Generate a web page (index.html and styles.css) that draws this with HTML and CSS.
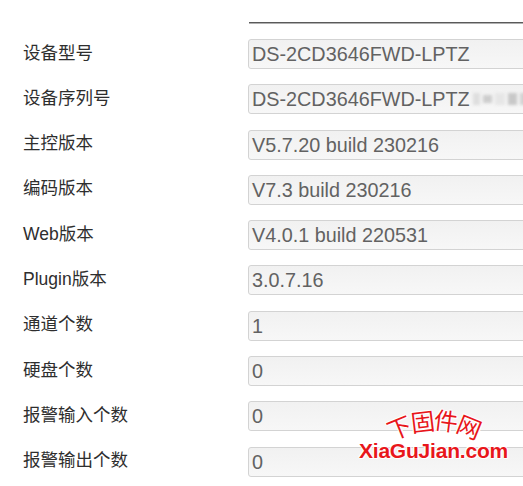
FILE: index.html
```html
<!DOCTYPE html>
<html lang="zh-CN">
<head>
<meta charset="utf-8">
<title>设备信息</title>
<link rel="stylesheet" href="styles.css">
</head>
<body>
<div class="page">
  <div class="topline"></div>
  <div class="form">
    <div class="label">设备型号</div>
    <div class="field">DS-2CD3646FWD-LPTZ</div>
    <div class="label">设备序列号</div>
    <div class="field">DS-2CD3646FWD-LPTZ<span class="mosaic"><i class="m1"></i><i class="m2"></i><i class="m3"></i><i class="m4"></i><i class="m5"></i></span></div>
    <div class="label">主控版本</div>
    <div class="field">V5.7.20 build 230216</div>
    <div class="label">编码版本</div>
    <div class="field">V7.3 build 230216</div>
    <div class="label">Web版本</div>
    <div class="field">V4.0.1 build 220531</div>
    <div class="label">Plugin版本</div>
    <div class="field">3.0.7.16</div>
    <div class="label">通道个数</div>
    <div class="field">1</div>
    <div class="label">硬盘个数</div>
    <div class="field">0</div>
    <div class="label">报警输入个数</div>
    <div class="field">0</div>
    <div class="label">报警输出个数</div>
    <div class="field">0</div>
  </div>
  <div class="watermark">
    <div class="wm-cn"><span class="c1">下</span><span class="c2">固</span><span class="c3">件</span><span class="c4">网</span></div>
    <div class="wm-en">XiaGuJian.com</div>
  </div>
</div>
</body>
</html>
```

FILE: styles.css
```css
html, body {
  margin: 0;
  padding: 0;
  background: #ffffff;
  overflow: hidden;
  width: 523px;
  height: 486px;
}
.page {
  position: relative;
  padding-top: 22px;
  width: 523px;
  height: 486px;
  box-sizing: border-box;
}
.topline {
  margin-left: 249px;
  height: 1px;
  background: #5a5a5a;
  border-bottom: 1px solid #b0b0b0;
}
.form {
  margin-top: 15px;
  display: grid;
  grid-template-columns: 248px 290px;
  grid-auto-rows: 30px;
  row-gap: 15.3px;
  align-items: center;
}
.label {
  padding-left: 23px;
  font-family: "Liberation Sans", "Noto Sans CJK SC", sans-serif;
  font-size: 17.5px;
  line-height: 24px;
  margin-top: -3px;
  color: #2e2e2e;
  white-space: nowrap;
}
.field {
  box-sizing: border-box;
  height: 30px;
  border: 1px solid #d3d3d3;
  border-radius: 3px;
  background: linear-gradient(#f1f1f1, #f7f7f7);
  padding-left: 3px;
  font-family: "Liberation Sans", sans-serif;
  font-size: 19.8px;
  line-height: 28px;
  color: #626262;
  white-space: nowrap;
  overflow: hidden;
  display: flex;
  align-items: center;
}
.mosaic {
  display: inline-flex;
  align-items: center;
  gap: 3px;
  margin-left: 3px;
  height: 20px;
  filter: blur(1.4px);
}
.mosaic i {
  display: block;
  width: 9px;
  height: 12px;
  background: #d6d6d6;
}
.mosaic .m1 { background: #dedede; width: 7px; }
.mosaic .m2 { background: #cdcdcd; height: 8px; }
.mosaic .m3 { background: #e6e6e6; width: 10px; }
.mosaic .m4 { background: #c8c8c8; }
.mosaic .m5 { background: #d2d2d2; width: 12px; }
.watermark {
  position: absolute;
  left: 356px;
  top: 409px;
  width: 155px;
  text-align: center;
  color: #e8161b;
  font-family: "Liberation Sans", "Noto Sans CJK SC", sans-serif;
  text-shadow: 1px 0 0 #fff, -1px 0 0 #fff, 0 1px 0 #fff, 0 -1px 0 #fff, 1px 1px 0 #fff, -1px -1px 0 #fff;
}
.wm-cn {
  font-size: 24px;
  line-height: 28px;
  height: 30px;
  letter-spacing: -1px;
}
.wm-cn span {
  display: inline-block;
}
.wm-cn .c1 { transform: translateY(6px) rotate(-22deg); }
.wm-cn .c2 { transform: translateY(0px) rotate(-7deg); }
.wm-cn .c3 { transform: translateY(-1px) rotate(7deg); }
.wm-cn .c4 { transform: translateY(5px) rotate(22deg); }
.wm-en {
  font-size: 21px;
  font-weight: bold;
  line-height: 24px;
  letter-spacing: -0.2px;
}
```
